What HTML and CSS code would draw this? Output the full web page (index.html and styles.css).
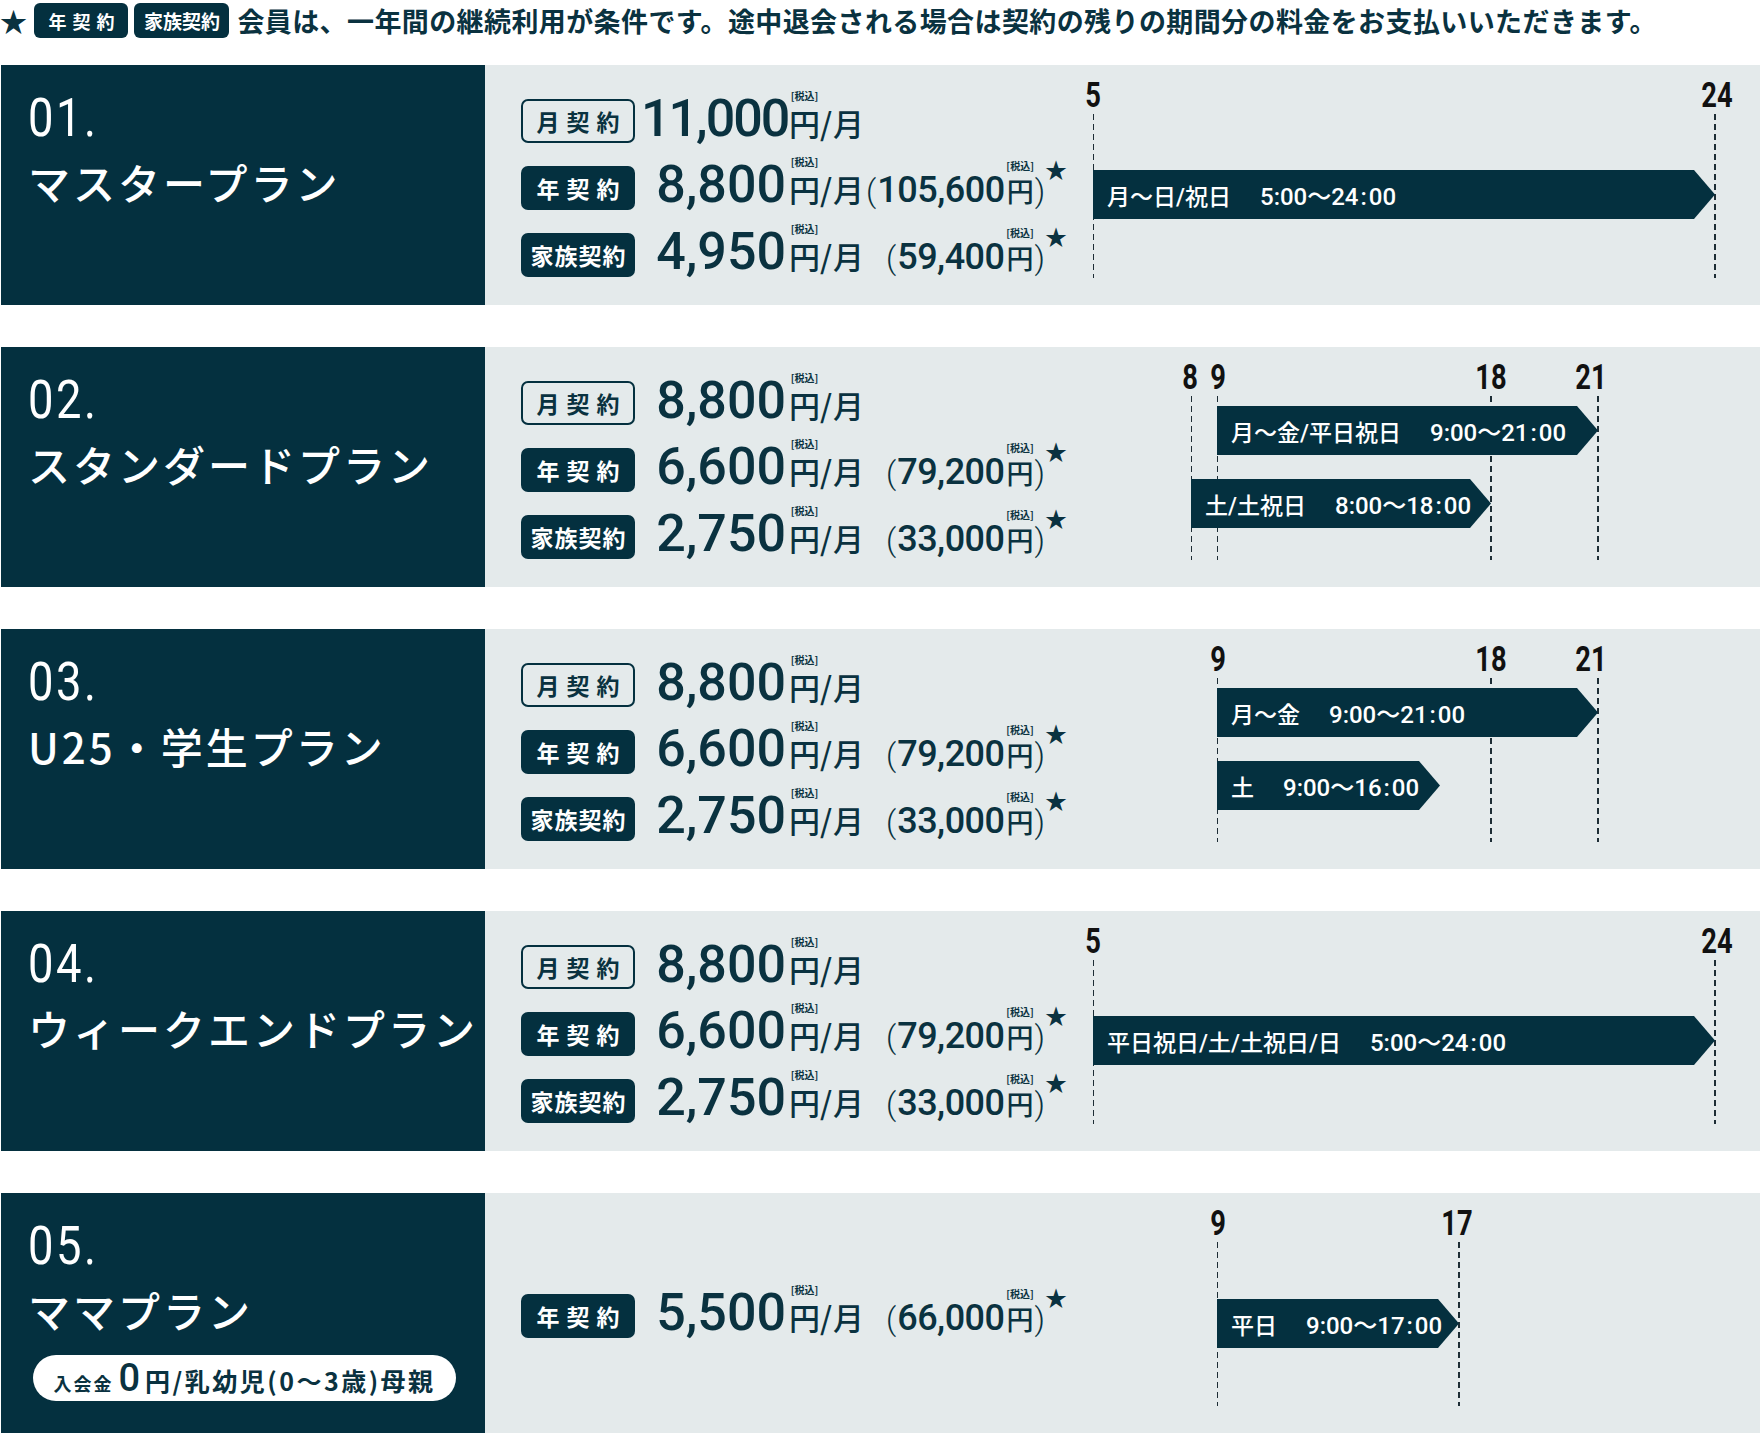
FILE: index.html
```html
<!DOCTYPE html>
<html lang="ja">
<head>
<meta charset="utf-8">
<title>料金プラン</title>
<link rel="stylesheet" href="styles.css">
</head>
<body>
<div class="page">
  <p class="note"><span class="note-star">★</span><span class="tag tag-year">年契約</span><span class="tag tag-family">家族契約</span>会員は、一年間の継続利用が条件です。途中退会される場合は契約の残りの期間分の料金をお支払いいただきます。</p>

  <!-- 01 -->
  <section class="plan">
    <div class="plan-name">
      <div class="plan-no">01.</div>
      <div class="plan-title">マスタープラン</div>
    </div>
    <div class="plan-body">
      <div class="prices">
        <div class="row">
          <span class="badge badge-outline">月契約</span>
          <div class="price">
            <span class="num num-tight">11,000</span><span class="yen">円<span class="tax">[税込]</span></span><span class="per">/月</span>
          </div>
        </div>
        <div class="row">
          <span class="badge">年契約</span>
          <div class="price">
            <span class="num">8,800</span><span class="yen">円<span class="tax">[税込]</span></span><span class="per">/月</span>
            <span class="total"><span class="paren">(</span><span class="tnum">105,600</span><span class="yen yen-s">円<span class="tax">[税込]</span></span><span class="paren">)</span><span class="mark">★</span></span>
          </div>
        </div>
        <div class="row">
          <span class="badge badge-family">家族契約</span>
          <div class="price">
            <span class="num">4,950</span><span class="yen">円<span class="tax">[税込]</span></span><span class="per">/月</span>
            <span class="total"><span class="paren">(</span><span class="tnum">59,400</span><span class="yen yen-s">円<span class="tax">[税込]</span></span><span class="paren">)</span><span class="mark">★</span></span>
          </div>
        </div>
      </div>
      <div class="chart">
        <span class="hour" style="left:13px">5</span>
        <span class="hour" style="left:637px">24</span>
        <span class="line" style="left:13px"></span>
        <span class="line line-end" style="left:634px"></span>
        <div class="bar" style="left:13px;width:622px;top:105px"><span class="days">月〜日/祝日</span><span class="time">5:00〜24<span class="colon">:</span>00</span></div>
      </div>
    </div>
  </section>

  <!-- 02 -->
  <section class="plan">
    <div class="plan-name">
      <div class="plan-no">02.</div>
      <div class="plan-title">スタンダードプラン</div>
    </div>
    <div class="plan-body">
      <div class="prices">
        <div class="row">
          <span class="badge badge-outline">月契約</span>
          <div class="price">
            <span class="num">8,800</span><span class="yen">円<span class="tax">[税込]</span></span><span class="per">/月</span>
          </div>
        </div>
        <div class="row">
          <span class="badge">年契約</span>
          <div class="price">
            <span class="num">6,600</span><span class="yen">円<span class="tax">[税込]</span></span><span class="per">/月</span>
            <span class="total"><span class="paren">(</span><span class="tnum">79,200</span><span class="yen yen-s">円<span class="tax">[税込]</span></span><span class="paren">)</span><span class="mark">★</span></span>
          </div>
        </div>
        <div class="row">
          <span class="badge badge-family">家族契約</span>
          <div class="price">
            <span class="num">2,750</span><span class="yen">円<span class="tax">[税込]</span></span><span class="per">/月</span>
            <span class="total"><span class="paren">(</span><span class="tnum">33,000</span><span class="yen yen-s">円<span class="tax">[税込]</span></span><span class="paren">)</span><span class="mark">★</span></span>
          </div>
        </div>
      </div>
      <div class="chart">
        <span class="hour" style="left:110px">8</span>
        <span class="hour" style="left:138px">9</span>
        <span class="hour" style="left:411px">18</span>
        <span class="hour" style="left:511px">21</span>
        <span class="line" style="left:111px"></span>
        <span class="line" style="left:137px"></span>
        <span class="line line-end" style="left:410px"></span>
        <span class="line line-end" style="left:517px"></span>
        <div class="bar" style="left:137px;width:381px;top:59px"><span class="days">月〜金/平日祝日</span><span class="time">9:00〜21<span class="colon">:</span>00</span></div>
        <div class="bar" style="left:111px;width:300px;top:132px"><span class="days">土/土祝日</span><span class="time">8:00〜18<span class="colon">:</span>00</span></div>
      </div>
    </div>
  </section>

  <!-- 03 -->
  <section class="plan">
    <div class="plan-name">
      <div class="plan-no">03.</div>
      <div class="plan-title">U25・学生プラン</div>
    </div>
    <div class="plan-body">
      <div class="prices">
        <div class="row">
          <span class="badge badge-outline">月契約</span>
          <div class="price">
            <span class="num">8,800</span><span class="yen">円<span class="tax">[税込]</span></span><span class="per">/月</span>
          </div>
        </div>
        <div class="row">
          <span class="badge">年契約</span>
          <div class="price">
            <span class="num">6,600</span><span class="yen">円<span class="tax">[税込]</span></span><span class="per">/月</span>
            <span class="total"><span class="paren">(</span><span class="tnum">79,200</span><span class="yen yen-s">円<span class="tax">[税込]</span></span><span class="paren">)</span><span class="mark">★</span></span>
          </div>
        </div>
        <div class="row">
          <span class="badge badge-family">家族契約</span>
          <div class="price">
            <span class="num">2,750</span><span class="yen">円<span class="tax">[税込]</span></span><span class="per">/月</span>
            <span class="total"><span class="paren">(</span><span class="tnum">33,000</span><span class="yen yen-s">円<span class="tax">[税込]</span></span><span class="paren">)</span><span class="mark">★</span></span>
          </div>
        </div>
      </div>
      <div class="chart">
        <span class="hour" style="left:138px">9</span>
        <span class="hour" style="left:411px">18</span>
        <span class="hour" style="left:511px">21</span>
        <span class="line" style="left:137px"></span>
        <span class="line line-end" style="left:410px"></span>
        <span class="line line-end" style="left:517px"></span>
        <div class="bar" style="left:137px;width:381px;top:59px"><span class="days">月〜金</span><span class="time">9:00〜21<span class="colon">:</span>00</span></div>
        <div class="bar" style="left:137px;width:223px;top:132px"><span class="days">土</span><span class="time">9:00〜16<span class="colon">:</span>00</span></div>
      </div>
    </div>
  </section>

  <!-- 04 -->
  <section class="plan">
    <div class="plan-name">
      <div class="plan-no">04.</div>
      <div class="plan-title">ウィークエンドプラン</div>
    </div>
    <div class="plan-body">
      <div class="prices">
        <div class="row">
          <span class="badge badge-outline">月契約</span>
          <div class="price">
            <span class="num">8,800</span><span class="yen">円<span class="tax">[税込]</span></span><span class="per">/月</span>
          </div>
        </div>
        <div class="row">
          <span class="badge">年契約</span>
          <div class="price">
            <span class="num">6,600</span><span class="yen">円<span class="tax">[税込]</span></span><span class="per">/月</span>
            <span class="total"><span class="paren">(</span><span class="tnum">79,200</span><span class="yen yen-s">円<span class="tax">[税込]</span></span><span class="paren">)</span><span class="mark">★</span></span>
          </div>
        </div>
        <div class="row">
          <span class="badge badge-family">家族契約</span>
          <div class="price">
            <span class="num">2,750</span><span class="yen">円<span class="tax">[税込]</span></span><span class="per">/月</span>
            <span class="total"><span class="paren">(</span><span class="tnum">33,000</span><span class="yen yen-s">円<span class="tax">[税込]</span></span><span class="paren">)</span><span class="mark">★</span></span>
          </div>
        </div>
      </div>
      <div class="chart">
        <span class="hour" style="left:13px">5</span>
        <span class="hour" style="left:637px">24</span>
        <span class="line" style="left:13px"></span>
        <span class="line line-end" style="left:634px"></span>
        <div class="bar" style="left:13px;width:622px;top:105px"><span class="days">平日祝日/土/土祝日/日</span><span class="time">5:00〜24<span class="colon">:</span>00</span></div>
      </div>
    </div>
  </section>

  <!-- 05 -->
  <section class="plan">
    <div class="plan-name">
      <div class="plan-no">05.</div>
      <div class="plan-title">ママプラン</div>
      <div class="pill"><span class="pill-s">入会金</span><span class="pill-zero">0</span><span class="pill-m">円/乳幼児(0〜3歳)母親</span></div>
    </div>
    <div class="plan-body">
      <div class="prices">
        <div class="row">
          <span class="badge">年契約</span>
          <div class="price">
            <span class="num">5,500</span><span class="yen">円<span class="tax">[税込]</span></span><span class="per">/月</span>
            <span class="total"><span class="paren">(</span><span class="tnum">66,000</span><span class="yen yen-s">円<span class="tax">[税込]</span></span><span class="paren">)</span><span class="mark">★</span></span>
          </div>
        </div>
      </div>
      <div class="chart">
        <span class="hour" style="left:138px">9</span>
        <span class="hour" style="left:377px">17</span>
        <span class="line" style="left:137px"></span>
        <span class="line line-end" style="left:378px"></span>
        <div class="bar" style="left:137px;width:242px;top:106px"><span class="days">平日</span><span class="time">9:00〜17<span class="colon">:</span>00</span></div>
      </div>
    </div>
  </section>
</div>
</body>
</html>
```

FILE: styles.css
```css
:root {
  --navy: #04303f;
  --light: #e4eaeb;
  --ink: #0a3240;
}

* { box-sizing: border-box; }

body {
  margin: 0;
  background: #fff;
  color: var(--ink);
  font-family: "Noto Sans CJK JP", sans-serif;
}

.page { width: 1760px; }

/* ---------- note ---------- */
.note {
  display: flex;
  align-items: center;
  height: 35px;
  margin: 3px 0 27px;
  font-size: 27px;
  font-weight: 700;
  line-height: 1;
  letter-spacing: 0.4px;
  white-space: nowrap;
}
.note-star {
  font-size: 27px;
  margin: 0 7px 0 0;
}
.tag {
  display: inline-flex;
  align-items: center;
  justify-content: center;
  height: 35px;
  background: var(--navy);
  color: #fff;
  border-radius: 6px;
  font-weight: 700;
}
.tag-year {
  width: 94px;
  font-size: 18px;
  letter-spacing: 6px;
  padding-left: 6px;
  margin-right: 6px;
}
.tag-family {
  width: 95px;
  font-size: 19px;
  letter-spacing: 0;
  margin-right: 8px;
}

/* ---------- plan block ---------- */
.plan {
  display: flex;
  height: 240px;
  margin-left: 1px;
}
.plan + .plan { margin-top: 42px; }

.plan-name {
  width: 484px;
  flex: none;
  background: var(--navy);
  color: #fff;
  padding: 26px 0 0 27px;
}
.plan-no {
  font-family: Roboto, sans-serif;
  font-weight: 400;
  font-size: 54px;
  line-height: 54px;
  letter-spacing: 3px;
  transform: scaleX(0.84);
  transform-origin: left center;
}
.plan-title {
  margin-top: 16px;
  font-size: 42px;
  line-height: 42px;
  font-weight: 500;
  letter-spacing: 3px;
  white-space: nowrap;
}

.pill {
  display: flex;
  align-items: baseline;
  justify-content: center;
  width: 423px;
  height: 46px;
  margin: 24px 0 0 5px;
  background: #fff;
  border-radius: 23px;
  color: var(--ink);
  font-weight: 700;
  line-height: 46px;
  white-space: nowrap;
}
.pill-s { font-size: 18px; letter-spacing: 2px; margin-right: 5px; }
.pill-zero { font-family: Roboto, sans-serif; font-weight: 500; font-size: 38px; margin-right: 5px; }
.pill-m { font-size: 25px; letter-spacing: 2.5px; }

.plan-body {
  flex: 1;
  display: flex;
  background: var(--light);
}

/* ---------- prices ---------- */
.prices {
  width: 595px;
  flex: none;
  display: flex;
  flex-direction: column;
  justify-content: center;
  gap: 23px;
  padding: 6px 0 0 36px;
}
.row {
  display: flex;
  align-items: center;
  height: 44px;
}
.badge {
  flex: none;
  display: flex;
  align-items: center;
  justify-content: center;
  width: 114px;
  height: 44px;
  border-radius: 7px;
  background: var(--navy);
  color: #fff;
  font-size: 23px;
  font-weight: 700;
  letter-spacing: 7px;
  padding-left: 7px;
  line-height: 1;
}
.badge-outline {
  background: transparent;
  color: var(--ink);
  border: 2px solid var(--navy);
}
.badge-family {
  letter-spacing: 1px;
  padding-left: 1px;
}

.price {
  flex: none;
  display: flex;
  align-items: baseline;
  width: 432px;
  white-space: nowrap;
  line-height: 44px;
}
.price > * { flex: none; }
.num {
  width: 145px;
  margin-left: 6px;
  text-align: right;
  font-family: Roboto, sans-serif;
  font-weight: 500;
  font-size: 52px;
}
.num-tight { letter-spacing: -2px; }

.yen {
  position: relative;
  margin-left: 3px;
  font-size: 31px;
  font-weight: 500;
}
.tax {
  position: absolute;
  left: 50%;
  top: -10px;
  transform: translateX(-50%);
  font-size: 10px;
  line-height: 10px;
  font-weight: 700;
  letter-spacing: 0;
}
.per {
  font-size: 31px;
  font-weight: 500;
  letter-spacing: 1px;
}

.total {
  margin-left: auto;
  display: flex;
  align-items: baseline;
}
.paren {
  font-family: Roboto, sans-serif;
  font-weight: 300;
  font-size: 32px;
  margin: 0 1px;
}
.tnum {
  font-family: Roboto, sans-serif;
  font-weight: 500;
  font-size: 36px;
  letter-spacing: -0.5px;
}
.yen-s {
  margin-left: 2px;
  font-size: 27px;
}
.yen-s .tax { top: -8px; }
.mark {
  position: relative;
  top: -24px;
  margin-left: -1px;
  font-size: 22px;
  line-height: 22px;
}

/* ---------- chart ---------- */
.chart {
  flex: 1;
  position: relative;
}
.hour {
  position: absolute;
  top: 14px;
  transform: translateX(-50%) scaleX(0.78);
  font-family: Roboto, sans-serif;
  font-weight: 700;
  font-size: 35px;
  line-height: 34px;
  color: #111;
}
.line {
  position: absolute;
  top: 49px;
  height: 164px;
  width: 1px;
  background: repeating-linear-gradient(to bottom, #1d2d35 0 6px, transparent 6px 10px);
}
.line-end { width: 2px; }

.bar {
  position: absolute;
  height: 49px;
  display: flex;
  align-items: center;
  padding-left: 14px;
  background: var(--navy);
  color: #fff;
  clip-path: polygon(0 0, calc(100% - 21px) 0, 100% 50%, calc(100% - 21px) 100%, 0 100%);
  font-family: Roboto, "Noto Sans CJK JP", sans-serif;
  font-weight: 500;
  font-size: 23px;
  white-space: nowrap;
}
.days { margin-right: 29px; }
.time { font-size: 24px; }
.colon { margin: 0 2px; }
```
